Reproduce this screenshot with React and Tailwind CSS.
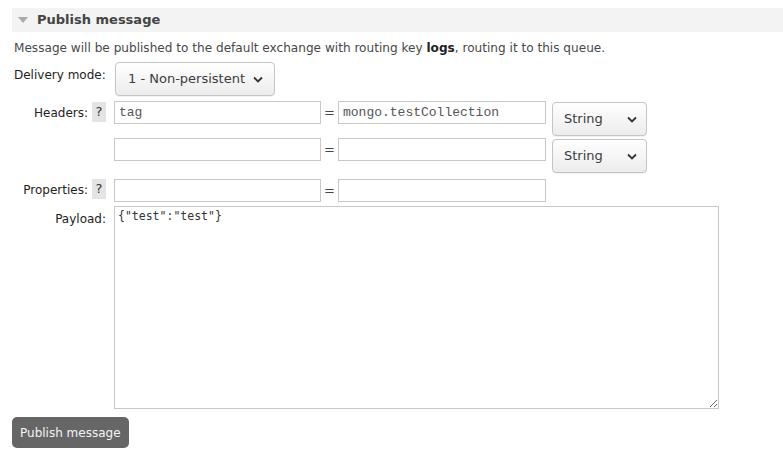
import React from "react";

const Chevron = () => (
    <svg width="10" height="7" viewBox="0 0 10 7" className="shrink-0">
        <path d="M1 1.5 L5 5.5 L9 1.5" fill="none" stroke="#333" strokeWidth="1.8" />
    </svg>
);

const SelectBox = ({ label, className = "" }) => (
    <div
        className={`flex items-center justify-between whitespace-nowrap rounded-[4px] border border-[#c4c4c4] bg-gradient-to-b from-white to-[#ececec] text-[13px] text-[#3c3c3c] shadow-[0_1px_0_rgba(0,0,0,0.05)] ${className}`}
    >
        <span>{label}</span>
        <Chevron />
    </div>
);

const Help = () => (
    <span className="inline-flex h-[20px] w-[14px] items-center justify-center bg-[#e4e4e4] text-[13px] text-[#333]">
        ?
    </span>
);

const TextInput = ({ value = "", className = "" }) => (
    <input
        readOnly
        value={value}
        className={`h-[23px] border border-[#c8c8c8] bg-white px-[4px] font-['Liberation_Mono',monospace] text-[13px] text-[#555] outline-none ${className}`}
    />
);

const Eq = () => <span className="w-[17px] text-center text-[13px] leading-[23px] text-[#444]">=</span>;

const Pair = ({ k = "", v = "" }) => (
    <div className="flex h-[23px] items-start">
        <TextInput value={k} className="w-[207px]" />
        <Eq />
        <TextInput value={v} className="w-[208px]" />
    </div>
);

export default function App() {
    return (
        <div className="min-h-[462px] bg-white pl-[12px] pt-[8px] font-['DejaVu_Sans',sans-serif] text-[#444]">
            {/* section header */}
            <div className="flex h-[24px] items-center bg-[#f3f3f3] pl-[6px]">
                <svg width="10" height="6" viewBox="0 0 10 6" className="mr-[9px]">
                    <path d="M0 0 L10 0 L5 6 Z" fill="#aaa" />
                </svg>
                <span className="text-[13px] font-bold text-[#444]">Publish message</span>
            </div>

            <p className="mt-[7px] pl-[2px] text-[12.1px] text-[#484848]">
                Message will be published to the default exchange with routing key <b className="text-[#222]">logs</b>, routing it to this queue.
            </p>

            <div className="mt-[5px] flex items-start">
                <div className="w-[103px] pl-[2px] pt-[4px] text-[12px] text-[#222]">Delivery mode:</div>
                <SelectBox label="1 - Non-persistent" className="h-[34px] w-[160px] pl-[12px] pr-[11px]" />
            </div>

            {/* headers */}
            <div className="mt-[5px] flex items-start">
                <div className="flex w-[102px] items-start justify-end gap-[4px] pr-[8px] pt-[1px]">
                    <span className="pt-[2px] text-[12px] text-[#222]">Headers:</span>
                    <Help />
                </div>
                <div className="flex flex-col gap-[2px]">
                    <div className="flex items-start">
                        <Pair k="tag" v="mongo.testCollection" />
                        <SelectBox label="String" className="ml-[6px] mt-[1px] h-[34px] w-[95px] pl-[11px] pr-[9px]" />
                    </div>
                    <div className="flex items-start">
                        <Pair />
                        <SelectBox label="String" className="ml-[6px] mt-[1px] h-[34px] w-[95px] pl-[11px] pr-[9px]" />
                    </div>
                </div>
            </div>

            {/* properties */}
            <div className="mt-[6px] flex h-[23px] items-start">
                <div className="flex w-[102px] items-start justify-end gap-[4px] pr-[8px]">
                    <span className="pt-[2px] text-[12px] text-[#222]">Properties:</span>
                    <Help />
                </div>
                <Pair />
            </div>

            {/* payload */}
            <div className="mt-[4px] flex items-start">
                <div className="w-[102px] pr-[8px] pt-[4px] text-right text-[12px] text-[#222]">Payload:</div>
                <textarea
                    readOnly
                    value={'{"test":"test"}'}
                    className="block h-[203px] w-[605px] border border-[#c8c8c8] px-[3px] py-[1px] font-['DejaVu_Sans_Mono',monospace] text-[11.5px] text-[#333] outline-none"
                />
            </div>

            <button className="mt-[8px] h-[31px] rounded-[5px] bg-[#666] px-[8px] text-[12px] text-[#f4f4f4]">
                Publish message
            </button>
        </div>
    );
}
